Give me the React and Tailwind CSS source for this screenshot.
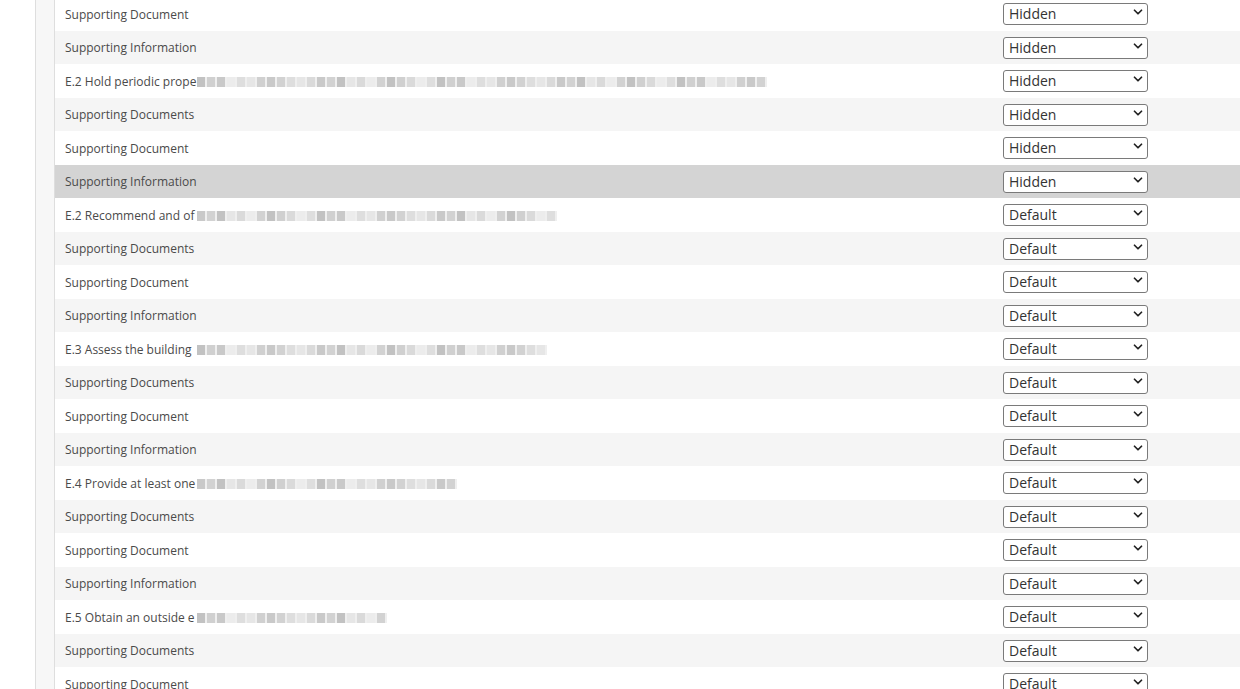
import { ChevronDown } from "lucide-react";

const rows = [
  { label: "Supporting Document", value: "Hidden" },
  { label: "Supporting Information", value: "Hidden" },
  { label: "E.2 Hold periodic prope", value: "Hidden", blur: 576 },
  { label: "Supporting Documents", value: "Hidden" },
  { label: "Supporting Document", value: "Hidden" },
  { label: "Supporting Information", value: "Hidden", active: true },
  { label: "E.2 Recommend and of", value: "Default", blur: 368 },
  { label: "Supporting Documents", value: "Default" },
  { label: "Supporting Document", value: "Default" },
  { label: "Supporting Information", value: "Default" },
  { label: "E.3 Assess the building", value: "Default", blur: 351 },
  { label: "Supporting Documents", value: "Default" },
  { label: "Supporting Document", value: "Default" },
  { label: "Supporting Information", value: "Default" },
  { label: "E.4 Provide at least one", value: "Default", blur: 267 },
  { label: "Supporting Documents", value: "Default" },
  { label: "Supporting Document", value: "Default" },
  { label: "Supporting Information", value: "Default" },
  { label: "E.5 Obtain an outside e", value: "Default", blur: 191 },
  { label: "Supporting Documents", value: "Default" },
  { label: "Supporting Document", value: "Default" },
];

const shades = [
  "bg-[#d2d2d2]",
  "bg-[#e6e6e6]",
  "bg-[#c9c9c9]",
  "bg-[#dedede]",
  "bg-[#d0d0d0]",
  "bg-[#ececec]",
  "bg-[#c2c2c2]",
  "bg-[#dadada]",
];

// pixelated placeholder for the redacted part of the title
function Redacted({ width, seed }) {
  const count = Math.floor(width / 10);
  return (
    <span className="flex h-[10px] items-center" style={{ width }}>
      {Array.from({ length: count }).map((_, i) => (
        <span
          key={i}
          className={`h-[10px] w-[10px] border-r-2 border-[#efefef] ${shades[(i * 5 + seed * 3 + (i % 3)) % shades.length]}`}
        />
      ))}
    </span>
  );
}

function VisibilitySelect({ value }) {
  return (
    <div className="relative mb-[3px] h-[22px] w-[145px]">
      <select
        defaultValue={value}
        className="h-full w-full appearance-none rounded-[3px] border border-[#7a7a7a] bg-white pl-[5px] text-[14px] leading-none text-[#333] outline-none"
        style={{ fontFamily: '"Open Sans", "Noto Sans", sans-serif' }}
      >
        <option>Default</option>
        <option>Hidden</option>
        <option>Visible</option>
      </select>
      <ChevronDown
        className="pointer-events-none absolute right-[3px] top-1/2 h-[14px] w-[14px] -translate-y-1/2 text-[#222]"
        strokeWidth={3}
      />
    </div>
  );
}

export default function App() {
  return (
    <div
      className="flex h-screen w-full overflow-hidden bg-white"
      style={{ fontFamily: '"Open Sans", "Noto Sans", sans-serif' }}
    >
      <div className="w-[35px] shrink-0 bg-white" />
      <div className="w-[20px] shrink-0 border-x border-[#dedede] bg-[#f7f7f7]" />

      <div className="-mt-[3px] flex-1">
        {rows.map((row, i) => (
          <div
            key={i}
            className={`flex h-[33.5px] items-center ${
              row.active ? "bg-[#d4d4d4]" : i % 2 === 1 ? "bg-[#f5f5f5]" : "bg-white"
            }`}
          >
            <div className="flex w-[948px] items-center pl-[10px] pt-[2px] text-[12px] text-[#4a4a4a]">
              <span className="w-[132px] overflow-hidden whitespace-nowrap">
                {row.label}
              </span>
              {row.blur && <Redacted width={row.blur} seed={i} />}
            </div>
            <VisibilitySelect value={row.value} />
          </div>
        ))}
      </div>
    </div>
  );
}
